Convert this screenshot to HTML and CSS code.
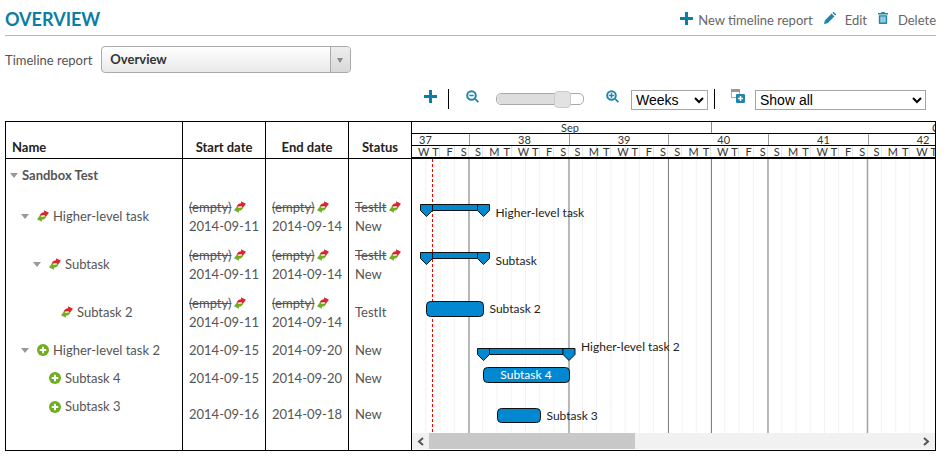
FILE: index.html
```html
<!DOCTYPE html>
<html lang="en">
<head>
    <meta charset="UTF-8">
    <meta name="viewport" content="width=device-width, initial-scale=1.0">
    <title>Overview - Timeline report</title>
    <link rel="stylesheet" href="styles.css">
</head>
<body>
    <svg class="defs" width="0" height="0">
        <symbol id="i-move" viewBox="0 0 12 12">
            <path fill="#d9252b" d="M2.500 6.200C3 3.500 5 2.300 7.200 2.300L7 .2 12 2.800 8.400 7.200 7.800 5.200C6 5 4.200 5.300 2.500 6.200Z"/>
            <path fill="#6fae1e" d="M9.500 5.800C9 8.500 7 9.700 4.800 9.700L5 11.800 0 9.200 3.600 4.800 4.200 6.800C6 7 7.800 6.700 9.500 5.800Z"/>
        </symbol>
        <symbol id="i-add" viewBox="0 0 12 12">
            <circle cx="6" cy="6" r="6" fill="#6fae1e"/>
            <path fill="#fff" d="M5 2.700h2V5h2.300v2H7v2.300H5V7H2.700V5H5Z"/>
        </symbol>
        <symbol id="i-plus" viewBox="0 0 13 13">
            <path d="M5 0h3v5h5v3H8v5H5V8H0V5h5Z"/>
        </symbol>
    </svg>

    <header class="top">
        <h1>OVERVIEW</h1>
        <nav class="actions">
            <a class="action"><svg class="icon-plus" width="13" height="13"><use href="#i-plus"/></svg>New timeline report</a>
            <a class="action action-edit">
                <svg width="12" height="12" viewBox="0 0 12 12"><path d="M0 12l.8-3.600L7.600 1.600l2.800 2.800-6.800 6.800ZM8.400.8l.6-.6c.3-.3.7-.3 1 0l1.800 1.800c.3.3.3.7 0 1l-.6.6Z"/></svg>
                Edit
            </a>
            <a class="action">
                <svg width="10" height="12" viewBox="0 0 10 12"><path d="M3.500 0h3l.5 1h3v1.500H0V1h3ZM.8 3.200h8.400V11c0 .6-.4 1-1 1H1.800c-.6 0-1-.4-1-1ZM2.600 4.500v6h1v-6Zm1.900 0v6h1v-6Zm1.900 0v6h1v-6Z"/></svg>
                Delete
            </a>
        </nav>
    </header>

    <div class="picker">
        <label>Timeline report</label>
        <div class="combo">
            <span class="combo-value">Overview</span>
            <span class="combo-arrow"></span>
        </div>
    </div>

    <div class="toolbar">
        <svg class="tool-add" width="13" height="13"><use href="#i-plus"/></svg>
        <span class="sep sep-a"></span>
        <svg class="tool-out" width="13" height="13" viewBox="0 0 13 13"><circle cx="5.500" cy="5.500" r="4.300" fill="none" stroke-width="2"/><path d="M3.300 4.700h4.400v1.600H3.300ZM8.500 9.500l1.200-1.200 3.300 3.300-1.200 1.200Z"/></svg>
        <div class="slider"><span class="slider-fill"></span><span class="slider-handle"></span></div>
        <svg class="tool-in" width="13" height="13" viewBox="0 0 13 13"><circle cx="5.500" cy="5.500" r="4.300" fill="none" stroke-width="2"/><path d="M4.800 3h1.400v1.800H8v1.400H6.200V8H4.800V6.200H3V4.800h1.800ZM8.500 9.500l1.200-1.200 3.300 3.300-1.200 1.200Z"/></svg>
        <select class="sel-scale"><option>Weeks</option></select>
        <span class="sep sep-b"></span>
        <svg class="tool-group" width="14" height="14" viewBox="0 0 14 14"><rect class="g-box" x=".5" y=".5" width="8" height="8"/><rect x="0" y="0" width="9" height="3" fill="#999"/><rect x="5" y="5" width="9" height="9" rx="1" fill="#1f87ad"/><path fill="#fff" d="M8.800 7h1.400v1.800H12v1.400h-1.800V12H8.800v-1.800H7V8.800h1.800Z"/></svg>
        <select class="sel-filter"><option>Show all</option></select>
    </div>

    <section class="report">
        <table class="tasks">
            <colgroup>
                <col class="col-name"><col class="col-date"><col class="col-date"><col class="col-status">
            </colgroup>
            <thead>
                <tr>
                    <th class="th-name">Name</th>
                    <th>Start date</th>
                    <th>End date</th>
                    <th>Status</th>
                </tr>
            </thead>
            <tbody>
                <tr class="row-root">
                    <td><div class="tree root"><i class="twist"></i>Sandbox Test</div></td>
                    <td></td><td></td><td></td>
                </tr>
                <tr class="row-tall">
                    <td><div class="tree lvl1"><i class="twist"></i><svg class="ic"><use href="#i-move"/></svg>Higher-level task</div></td>
                    <td><s>(empty)</s><svg class="ic-sm"><use href="#i-move"/></svg><br>2014-09-11</td>
                    <td><s>(empty)</s><svg class="ic-sm"><use href="#i-move"/></svg><br>2014-09-14</td>
                    <td><s>TestIt</s><svg class="ic-sm"><use href="#i-move"/></svg><br>New</td>
                </tr>
                <tr class="row-tall">
                    <td><div class="tree lvl2"><i class="twist"></i><svg class="ic"><use href="#i-move"/></svg>Subtask</div></td>
                    <td><s>(empty)</s><svg class="ic-sm"><use href="#i-move"/></svg><br>2014-09-11</td>
                    <td><s>(empty)</s><svg class="ic-sm"><use href="#i-move"/></svg><br>2014-09-14</td>
                    <td><s>TestIt</s><svg class="ic-sm"><use href="#i-move"/></svg><br>New</td>
                </tr>
                <tr class="row-tall">
                    <td><div class="tree lvl3"><svg class="ic"><use href="#i-move"/></svg>Subtask 2</div></td>
                    <td><s>(empty)</s><svg class="ic-sm"><use href="#i-move"/></svg><br>2014-09-11</td>
                    <td><s>(empty)</s><svg class="ic-sm"><use href="#i-move"/></svg><br>2014-09-14</td>
                    <td>TestIt</td>
                </tr>
                <tr class="row-low">
                    <td><div class="tree lvl1"><i class="twist"></i><svg class="ic"><use href="#i-add"/></svg>Higher-level task 2</div></td>
                    <td>2014-09-15</td><td>2014-09-20</td><td>New</td>
                </tr>
                <tr class="row-low">
                    <td><div class="tree lvl4"><svg class="ic"><use href="#i-add"/></svg>Subtask 4</div></td>
                    <td>2014-09-15</td><td>2014-09-20</td><td>New</td>
                </tr>
                <tr class="row-last">
                    <td class="name-top"><div class="tree lvl4"><svg class="ic"><use href="#i-add"/></svg>Subtask 3</div></td>
                    <td>2014-09-16</td><td>2014-09-18</td><td>New</td>
                </tr>
                <tr class="row-fill"><td></td><td></td><td></td><td></td></tr>
            </tbody>
        </table>

        <div class="gantt">
            <div class="g-row months">
                <div class="month sep-month">Sep</div>
                <div class="month month-next">Oct</div>
            </div>
            <div class="g-row weeks">
                <div class="week week-first">37</div>
                <div class="week">38</div>
                <div class="week">39</div>
                <div class="week">40</div>
                <div class="week">41</div>
                <div class="week week-last">42</div>
            </div>
            <div class="g-row days">
                <span>W</span><span>T</span><span>F</span><span>S</span>
                <span>S</span><span>M</span><span>T</span><span>W</span><span>T</span><span>F</span><span>S</span>
                <span>S</span><span>M</span><span>T</span><span>W</span><span>T</span><span>F</span><span>S</span>
                <span>S</span><span>M</span><span>T</span><span>W</span><span>T</span><span>F</span><span>S</span>
                <span>S</span><span>M</span><span>T</span><span>W</span><span>T</span><span>F</span><span>S</span>
                <span>S</span><span>M</span><span>T</span><span>W</span><span>T</span>
            </div>

            <!-- viewBox uses page coordinates so the dates line up with the header -->
            <svg class="chart" width="523" height="274" viewBox="412 159 523 274">
                <defs>
                    <pattern id="day-lines" x="412" y="159" width="14.24" height="10" patternUnits="userSpaceOnUse">
                        <rect x="13.5" width="1.5" height="10" fill="#eee"/>
                    </pattern>
                </defs>
                <rect x="412" y="159" width="523" height="274" fill="url(#day-lines)"/>
                <path class="wk-line" d="M469 159V433M569 159V433M768 159V433M867.500 159V433"/>
                <path class="mo-line" d="M668.500 159V433M711.500 159V433"/>
                <path class="today" d="M432.500 159V433"/>

                <g class="bar">
                    <path d="M420.500 204.500H432.500V210.500L426.500 216.500 420.500 210.500Z"/>
                    <path d="M432.500 204.500H477.500V210.500H432.500Z"/>
                    <path d="M477.500 204.500H489.500V210.500L483.500 216.500 477.500 210.500Z"/>
                    <path d="M420.500 252.500H432.500V258.500L426.500 264.500 420.500 258.500Z"/>
                    <path d="M432.500 252.500H477.500V258.500H432.500Z"/>
                    <path d="M477.500 252.500H489.500V258.500L483.500 264.500 477.500 258.500Z"/>
                    <rect x="426.500" y="301.500" width="57" height="15" rx="4"/>
                    <path d="M477.500 348.500H489.500V354.500L483.500 360.500 477.500 354.500Z"/>
                    <path d="M489.500 348.500H563V354.500H489.500Z"/>
                    <path d="M563 348.500H575V354.500L569 360.500 563 354.500Z"/>
                    <rect x="483.500" y="367.500" width="86" height="15" rx="4"/>
                    <rect x="497.500" y="408.500" width="43" height="14" rx="4"/>
                </g>

                <text x="495.500" y="217">Higher-level task</text>
                <text x="495.500" y="265">Subtask</text>
                <text x="489.500" y="313">Subtask 2</text>
                <text x="581" y="351">Higher-level task 2</text>
                <text class="inbar" x="526" y="379">Subtask 4</text>
                <text x="546.500" y="420">Subtask 3</text>
            </svg>

            <div class="scroll">
                <span class="scroll-btn"><svg width="7" height="9" viewBox="0 0 7 9"><path d="M6 1L2 4.500 6 8" fill="none" stroke="#555" stroke-width="2"/></svg></span>
                <span class="scroll-thumb"></span>
                <span class="scroll-space"></span>
                <span class="scroll-btn"><svg width="7" height="9" viewBox="0 0 7 9"><path d="M1 1l4 3.500L1 8" fill="none" stroke="#555" stroke-width="2"/></svg></span>
            </div>
        </div>
    </section>
</body>
</html>
```

FILE: styles.css
```css
body {
    margin: 0;
    padding: 0 13px 0 5px;
    font-family: Lato, "Open Sans", sans-serif;
    font-size: 13px;
    color: #555;
    background: #fff;
}
.defs {
    position: absolute;
}

/* page title */
.top {
    display: flex;
    justify-content: space-between;
    align-items: center;
    height: 35px;
    border-bottom: 1px solid #b5b5b5;
}
.top h1 {
    margin: 0;
    padding-top: 3px;
    font-size: 18px;
    font-weight: 700;
    color: #0b7ea6;
}
.actions {
    display: flex;
    align-items: center;
    gap: 11px;
    padding-top: 5px;
}
.action {
    display: flex;
    align-items: center;
    gap: 10px;
    color: #666;
}
.action-edit {
    gap: 9px;
}
.action svg {
    fill: #1f87ad;
    margin-top: -5px;
}
.action .icon-plus {
    fill: #0b7ea6;
    margin-top: -3px;
    margin-right: -5px;
}

/* report picker */
.picker {
    display: flex;
    align-items: center;
    gap: 9px;
    margin-top: 10px;
}
.combo {
    display: flex;
    width: 248px;
    height: 25px;
    border: 1px solid #aaa;
    border-radius: 4px;
    background: linear-gradient(#fff, #e9e9e9);
}
.combo-value {
    flex: 1;
    padding-left: 8px;
    line-height: 25px;
    font-weight: 700;
    color: #333;
}
.combo-arrow {
    position: relative;
    width: 19px;
    border-left: 1px solid #aaa;
    background: linear-gradient(#eee, #d8d8d8);
    border-radius: 0 3px 3px 0;
}
.combo-arrow::after {
    content: "";
    position: absolute;
    top: 11px;
    left: 6px;
    border: 3.500px solid transparent;
    border-top: 5px solid #888;
    border-bottom: 0;
}

/* chart tools */
.toolbar {
    display: flex;
    align-items: flex-start;
    justify-content: flex-end;
    height: 33px;
    margin-top: 15px;
    padding-right: 10px;
}
.toolbar svg {
    margin-top: 2px;
    fill: #1f87ad;
    stroke: #1f87ad;
    stroke-width: 0;
}
.toolbar .tool-add {
    fill: #0b7ea6;
}
.toolbar circle {
    stroke-width: 2;
}
.toolbar .tool-group {
    margin-top: 1px;
    margin-left: 16px;
    margin-right: 10px;
    stroke: none;
}
.toolbar .g-box {
    fill: #fff;
    stroke: #aaa;
    stroke-width: 1;
}
.sep {
    width: 1px;
    height: 20px;
    margin-top: 1px;
    background: #000;
}
.sep-a {
    margin-left: 11px;
    margin-right: 17px;
}
.sep-b {
    margin-left: 6px;
}
.slider {
    position: relative;
    width: 86px;
    height: 10px;
    margin: 5px 22px 0 17px;
    border: 1px solid #aaa;
    border-radius: 5px;
    background: #fff;
}
.slider-fill {
    display: block;
    width: 60px;
    height: 10px;
    border-radius: 5px 0 0 5px;
    background: #ddd;
}
.slider-handle {
    position: absolute;
    top: -3px;
    left: 57px;
    width: 15px;
    height: 15px;
    border: 1px solid #ccc;
    border-radius: 4px;
    background: #e2e2e2;
}
.toolbar select {
    height: 20px;
    margin: 2px 0 0 12px;
    padding: 0;
    border: 1px solid #a5a5a5;
    border-radius: 0;
    background: #fff;
    font-family: "Liberation Sans", Arial, sans-serif;
    font-size: 14px;
    color: #000;
}
.sel-scale {
    width: 77px;
}
.toolbar .sel-filter {
    width: 171px;
    margin-left: 0;
}

/* task table + gantt */
.report {
    display: flex;
    height: 328px;
    border: 1px solid #000;
}
.tasks {
    flex: none;
    width: 406px;
    height: 100%;
    table-layout: fixed;
    border-collapse: separate;
    border-spacing: 0;
}
.col-name {
    width: 177px;
}
.col-date {
    width: 83px;
}
.col-status {
    width: 63px;
}
th, td {
    border-right: 1px solid #000;
    padding: 0 0 0 6px;
}
th {
    height: 37px;
    padding: 14px 0 0;
    border-bottom: 1px solid #000;
    text-align: center;
    font-size: 13px;
    color: #222;
    box-sizing: border-box;
}
.th-name {
    padding-left: 6px;
    text-align: left;
}
td {
    line-height: 19px;
    vertical-align: middle;
}
td:first-child {
    padding-left: 0;
}
.row-root td {
    height: 33px;
}
.row-tall td {
    height: 48px;
}
.row-tall td + td {
    padding-top: 1px;
    box-sizing: border-box;
}
.row-low td {
    height: 28px;
}
.row-last td {
    height: 39px;
}
.row-fill td {
    height: auto;
}
.row-last .name-top {
    vertical-align: top;
    padding-top: 5px;
}
.tree {
    display: flex;
    align-items: center;
}
.root {
    padding-left: 4px;
    font-weight: 700;
}
.root .twist {
    margin-right: 4px;
}
.lvl1 {
    padding-left: 15px;
}
.lvl2 {
    padding-left: 27px;
}
.lvl3 {
    padding-left: 55px;
}
.lvl4 {
    padding-left: 43px;
}
.twist {
    flex: none;
    width: 0;
    height: 0;
    margin-right: 8px;
    border: 4px solid transparent;
    border-top: 5px solid #999;
    border-bottom: 0;
}
.ic {
    flex: none;
    width: 12px;
    height: 12px;
    margin-right: 4px;
}
.ic-sm {
    width: 12px;
    height: 12px;
    margin-left: 3px;
    vertical-align: -1px;
}

.gantt {
    flex: 1;
    min-width: 0;
    overflow: hidden;
}
.g-row {
    display: flex;
    height: 11px;
    border-bottom: 1px solid #000;
    font-size: 11px;
    line-height: 11px;
    color: #333;
    white-space: nowrap;
}
.month {
    flex: none;
    width: 300px;
    padding-left: 149px;
    box-sizing: border-box;
}
.sep-month {
    border-right: 1px solid #888;
}
.month-next {
    padding-left: 220px;
}
.week {
    flex: none;
    width: 99.680px;
    padding-left: 48px;
    box-sizing: border-box;
    border-right: 1px solid #999;
}
.week-first {
    width: 58px;
    padding-left: 7px;
}
.week-last {
    border-right: 0;
}
.days {
    border-bottom-width: 2px;
}
.days span {
    flex: none;
    width: 14.240px;
    padding-left: 6px;
    box-sizing: border-box;
    border-right: 1px solid #e6e6e6;
}
.chart {
    display: block;
}
.chart text {
    font-family: Lato, sans-serif;
    font-size: 12px;
    fill: #222;
}
.chart .inbar {
    fill: #fff;
    text-anchor: middle;
}
.wk-line {
    fill: none;
    stroke: #a3a3a3;
    stroke-width: 1.500;
}
.mo-line {
    fill: none;
    stroke: #808080;
    stroke-width: 1;
}
.today {
    fill: none;
    stroke: #f00;
    stroke-dasharray: 3 2;
}
.bar path, .bar rect {
    fill: #0288d1;
    stroke: #111;
    stroke-width: 1;
}
.scroll {
    display: flex;
    height: 16px;
    background: #f1f1f1;
}
.scroll-btn {
    display: flex;
    align-items: center;
    justify-content: center;
    flex: none;
    width: 17px;
}
.scroll-thumb {
    flex: none;
    width: 206px;
    background: #c8c8c8;
}
.scroll-space {
    flex: 1;
}
```
